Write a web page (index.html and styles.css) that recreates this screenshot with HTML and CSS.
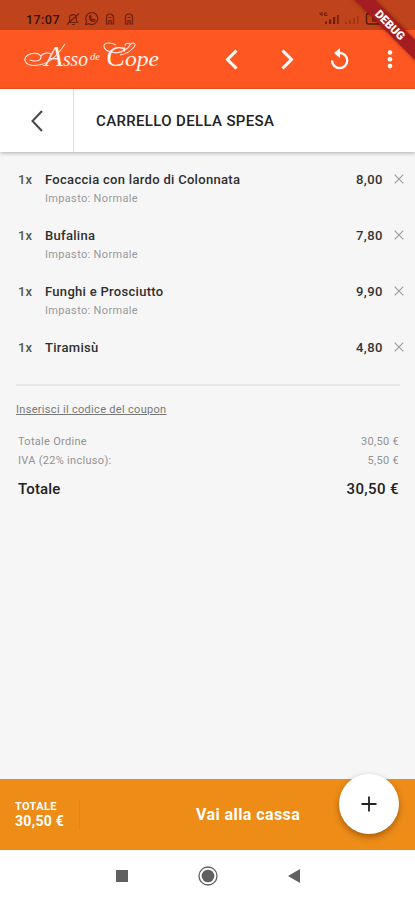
FILE: index.html
```html
<!DOCTYPE html>
<html lang="it">
<head>
<meta charset="utf-8">
<title>Carrello della spesa</title>
<link rel="stylesheet" href="styles.css">
</head>
<body>
<div class="screen">
  <header class="top">
    <div class="status">
      <span class="clock">17:07</span>
      <svg class="status-left" width="72" height="14" viewBox="0 0 72 14" fill="none" stroke="#701f0c" stroke-width="1.2">
        <path d="M3 10.5h8.500l-1.200-2V6a3.300 3.300 0 0 0-6.600 0v2.500zM1 12.500L13 1.500M6 12.500h3"/>
        <path d="M19.500 12.600l1-3.200a6 6 0 1 1 2.300 2.300zM23.500 4.500c0 3 2 5 4.800 5l.7-1.500-1.800-.9-.9.8c-1-.5-1.500-1-2-2l.8-.9-.7-1.500z"/>
        <path d="M40.500 12V5.500a3.500 3.500 0 0 1 7 0V12h-2.400V8.500h-2.200V12zM42.500 5.500h3M59.500 12V5.500a3.500 3.500 0 0 1 7 0V12h-2.400V8.500h-2.200V12zM61.500 5.500h3"/>
      </svg>
      <svg class="status-right" width="75" height="14" viewBox="0 0 75 14">
        <path d="M6 12V9.500h2V12zM10 12V7.500h2.200V12zM14 12V5h2.200v7zM18 12V3h1.700v9z" fill="#701f0c"/>
        <path d="M1 .5v2h2M3 0v4M8 1H5.500v2.500H8V2.500" stroke="#701f0c" fill="none"/>
        <path d="M26 12v-2h2v2zM30 12V8h2v4zM34 12V6h2v6zM38 12V4h1.500v8z" fill="#a13511"/>
        <rect x="47.500" y="1.500" width="20" height="10.500" rx="2" fill="none" stroke="#5d1a08" stroke-width="1.500"/>
        <path d="M53 4h8v6h-8z" fill="#8b2a0e"/>
      </svg>
    </div>
    <div class="appbar">
      <svg class="logo" width="140" height="40" viewBox="0 0 140 40">
        <g class="logo-text">
          <text x="21" y="27" class="cap" textLength="18" lengthAdjust="spacingAndGlyphs">A</text>
          <text x="39" y="27" textLength="25" lengthAdjust="spacingAndGlyphs">sso</text>
          <text x="66" y="21" class="small" textLength="10" lengthAdjust="spacingAndGlyphs">de</text>
          <text x="82" y="27" class="cap" textLength="19" lengthAdjust="spacingAndGlyphs">C</text>
          <text x="101" y="27" textLength="34" lengthAdjust="spacingAndGlyphs">ope</text>
        </g>
        <path d="M41 5C33 17 24 27 9 26.500 0 26-1 19 4 16c5-3 12-2 13 2 0 4-6 5-11 3M17 17c2-3 7-4 10-2M98 13c-9 2-17-1-18-5-1-5 7-5 12-2M92 14c7-1 13-5 14-8 0-3-5-2-5 1M106 6c3-4 7-1 4 2-3 4-8 7-14 8" fill="none" stroke="#ffe6dc" stroke-width="1.100"/>
      </svg>
      <svg class="actions" width="190" height="58" viewBox="0 0 190 58" fill="none" stroke="#fff" stroke-width="3">
        <path d="M11.500 20.500L2.500 29.500l9 9M57.500 20.500l9 9-9 9"/>
        <path d="M107 30.500a7.600 7.600 0 1 0 7.600-7.600" stroke-width="2.300"/>
        <path d="M115 18v10l-6-5z" fill="#fff" stroke="none"/>
        <g fill="#fff" stroke="none"><circle cx="165" cy="22.500" r="2.300"/><circle cx="165" cy="29.300" r="2.300"/><circle cx="165" cy="36.100" r="2.300"/></g>
      </svg>
    </div>
    <div class="debug">DEBUG</div>
  </header>

  <div class="title">
    <div class="back">
      <svg width="14" height="24" viewBox="0 0 14 24"><path d="M12 2L2.500 12l9.500 10" fill="none" stroke="#484848" stroke-width="2"/></svg>
    </div>
    <h1>CARRELLO DELLA SPESA</h1>
  </div>

  <main class="cart">
    <ul class="items">
      <li class="item"><span class="qty">1x</span><div class="info"><div class="name">Focaccia con lardo di Colonnata</div><div class="sub">Impasto: Normale</div></div><span class="price">8,00</span><svg class="x" width="10" height="10" viewBox="0 0 10 10"><path d="M.7.700l8.600 8.600M9.300.700L.7 9.300"/></svg></li>
      <li class="item"><span class="qty">1x</span><div class="info"><div class="name">Bufalina</div><div class="sub">Impasto: Normale</div></div><span class="price">7,80</span><svg class="x" width="10" height="10" viewBox="0 0 10 10"><path d="M.7.700l8.600 8.600M9.300.700L.7 9.300"/></svg></li>
      <li class="item"><span class="qty">1x</span><div class="info"><div class="name">Funghi e Prosciutto</div><div class="sub">Impasto: Normale</div></div><span class="price">9,90</span><svg class="x" width="10" height="10" viewBox="0 0 10 10"><path d="M.7.700l8.600 8.600M9.300.700L.7 9.300"/></svg></li>
      <li class="item"><span class="qty">1x</span><div class="info"><div class="name">Tiramisù</div></div><span class="price">4,80</span><svg class="x" width="10" height="10" viewBox="0 0 10 10"><path d="M.7.700l8.600 8.600M9.300.700L.7 9.300"/></svg></li>
    </ul>
    <div class="coupon"><a>Inserisci il codice del coupon</a></div>
    <div class="row"><span>Totale Ordine</span><span>30,50 €</span></div>
    <div class="row"><span>IVA (22% incluso):</span><span>5,50 €</span></div>
    <div class="row total"><span>Totale</span><span class="total-value">30,50 €</span></div>
  </main>

  <footer class="checkout">
    <div class="sum"><span class="sum-label">TOTALE</span><span class="sum-value">30,50 €</span></div>
    <div class="go">Vai alla cassa</div>
    <div class="fab"><svg width="16" height="16" viewBox="0 0 16 16"><path d="M8 .5v15M.5 8h15" stroke="#222" stroke-width="1.800"/></svg></div>
  </footer>

  <nav class="sysnav">
    <svg width="12" height="12" viewBox="0 0 12 12"><path d="M0 0h12v12H0z" fill="#606060"/></svg>
    <svg width="20" height="20" viewBox="0 0 20 20"><circle cx="10" cy="10" r="9" fill="none" stroke="#606060" stroke-width="1.300"/><circle cx="10" cy="10" r="6.300" fill="#606060"/></svg>
    <svg width="12" height="14" viewBox="0 0 12 14"><path d="M12 0v14L0 7z" fill="#606060"/></svg>
  </nav>
</div>
</body>
</html>
```
FILE: styles.css
```css
* { box-sizing: border-box; }
body { margin: 0; font-family: Roboto, "Liberation Sans", sans-serif; background: #fff; }
.screen { width: 415px; height: 900px; display: flex; flex-direction: column; overflow: hidden; background: #f6f6f6; }

.top { position: relative; overflow: hidden; height: 89px; flex: none; background: #ff5722; border-bottom: 1px solid #f9501a; }
.status { height: 30px; background: #bf431b; display: flex; align-items: center; padding: 8px 21px 0 26px; }
.clock { font-size: 12.5px; font-weight: 500; letter-spacing: .45px; color: #35100a; width: 40px; }
.status-right { margin-left: auto; }
.appbar { height: 58px; display: flex; align-items: center; justify-content: space-between; padding-left: 24px; }
.logo-text { fill: #fff3ee; font-family: "Liberation Serif", serif; font-style: italic; font-size: 21px; }
.logo-text .cap { font-size: 30px; }
.logo-text .small { font-size: 10px; }
.actions { flex: none; }
.debug { position: absolute; top: 18px; right: -31px; width: 112px; height: 14px; transform: rotate(45deg); background: #a51d20; color: #fff; font-size: 11.5px; font-weight: 900; line-height: 14px; text-align: center; box-shadow: 0 0 4px rgba(60, 0, 0, .5); }

.title { position: relative; z-index: 1; height: 63px; flex: none; display: flex; align-items: center; background: #fff; box-shadow: 0 1px 4px rgba(0, 0, 0, .3); }
.back { width: 74px; height: 63px; border-right: 1px solid #dedede; display: flex; align-items: center; justify-content: center; }
.title h1 { margin: 0 0 0 22px; font-size: 15px; font-weight: 500; letter-spacing: .35px; color: #222; white-space: nowrap; }

.cart { flex: 1; padding: 18px 15px 0 16px; color: #333; }
.items { list-style: none; margin: 0; padding: 0 0 0 2px; border-bottom: 2px solid #e9e9e9; height: 216px; }
.item { display: flex; align-items: flex-start; height: 56px; font-size: 13px; line-height: 19px; font-weight: 500; }
.qty { width: 27px; letter-spacing: .2px; color: #555; }
.info { flex: 1; }
.name { letter-spacing: .3px; color: #2f2f2f; }
.sub { font-size: 11px; font-weight: 400; color: #999; letter-spacing: .33px; }
.price { letter-spacing: .5px; }
.x { margin: 4px -4px 0 11px; fill: none; stroke: #999; stroke-width: 1.1; }
.coupon { height: 46px; padding-top: 14px; font-size: 11px; line-height: 20px; color: #777; letter-spacing: .31px; }
.coupon a { text-decoration: underline; }
.row { display: flex; justify-content: space-between; padding: 0 1px 0 2px; height: 19px; line-height: 19px; font-size: 11px; color: #929292; letter-spacing: .3px; }
.total { height: 36px; line-height: 38px; font-size: 15px; font-weight: 500; color: #222; letter-spacing: .15px; }
.total-value { letter-spacing: .4px; }

.checkout { position: relative; height: 71px; flex: none; background: #ee8c18; color: #fff; display: flex; align-items: center; font-weight: 700; }
.sum { width: 80px; height: 30px; padding-left: 15px; display: flex; flex-direction: column; border-right: 1px solid #e78310; white-space: nowrap; }
.sum-label { font-size: 11px; line-height: 14px; letter-spacing: .35px; }
.sum-value { font-size: 14px; line-height: 15px; letter-spacing: .3px; }
.go { flex: 1; padding-left: 116px; font-size: 16px; letter-spacing: .42px; }
.fab { position: absolute; left: 339px; top: -5px; width: 60px; height: 60px; border-radius: 50%; background: #fff; box-shadow: 0 3px 6px rgba(80, 40, 0, .45); display: flex; align-items: center; justify-content: center; }

.sysnav { height: 50px; flex: none; background: #fff; display: flex; align-items: center; justify-content: center; gap: 70px; padding-top: 1px; }
```
